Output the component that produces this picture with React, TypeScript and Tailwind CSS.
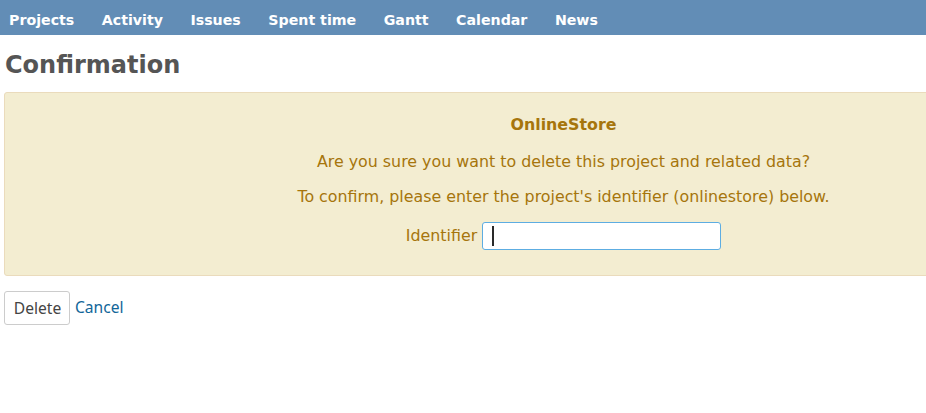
import React from "react";

export default function App() {
  const items = ["Projects", "Activity", "Issues", "Spent time", "Gantt", "Calendar", "News"];
  return (
    <div className="w-[926px] h-[413px] overflow-hidden bg-white" style={{ fontFamily: '"DejaVu Sans", Verdana, sans-serif' }}>
      <div className="h-[35px] bg-[#628db6] flex items-center pl-[9px] gap-[27.5px]">
        {items.map((t) => (
          <span key={t} className="text-white font-bold text-[14.2px] leading-none pt-[6px]">{t}</span>
        ))}
      </div>
      <h2 className="text-[24px] font-bold text-[#555] pl-[5px] pt-[15px] leading-[30px]">Confirmation</h2>
      <div className="ml-[4px] mt-[12px] w-[1119px] h-[184px] bg-[#f3edd1] border border-[#eadbbc] rounded-[3px] text-[#a6750c] text-[15.85px] flex flex-col items-center pt-[22px]">
        <p className="font-bold leading-[20px]">OnlineStore</p>
        <p className="mt-[17px] leading-[20px]">Are you sure you want to delete this project and related data?</p>
        <p className="mt-[15px] leading-[20px]">To confirm, please enter the project's identifier (onlinestore) below.</p>
        <div className="mt-[15px] flex items-center gap-[5px]">
          <label className="leading-[20px]">Identifier</label>
          <div className="w-[239px] h-[28px] bg-white border border-[#5dade2] rounded-[3px] flex items-center pl-[9px]">
            <div className="w-[2px] h-[20px] bg-[#2a2a2a]" />
          </div>
        </div>
      </div>
      <div className="flex items-center mt-[15px] ml-[4px] gap-[5px]">
        <button className="h-[34px] w-[66px] border border-[#ccc] rounded-[3px] bg-white text-[15.6px] text-[#444] pl-[1px] pt-[2px]" style={{ fontFamily: '"Noto Sans", sans-serif' }}>Delete</button>
        <a className="text-[15.6px] text-[#169]" style={{ fontFamily: '"Noto Sans", sans-serif' }}>Cancel</a>
      </div>
    </div>
  );
}
